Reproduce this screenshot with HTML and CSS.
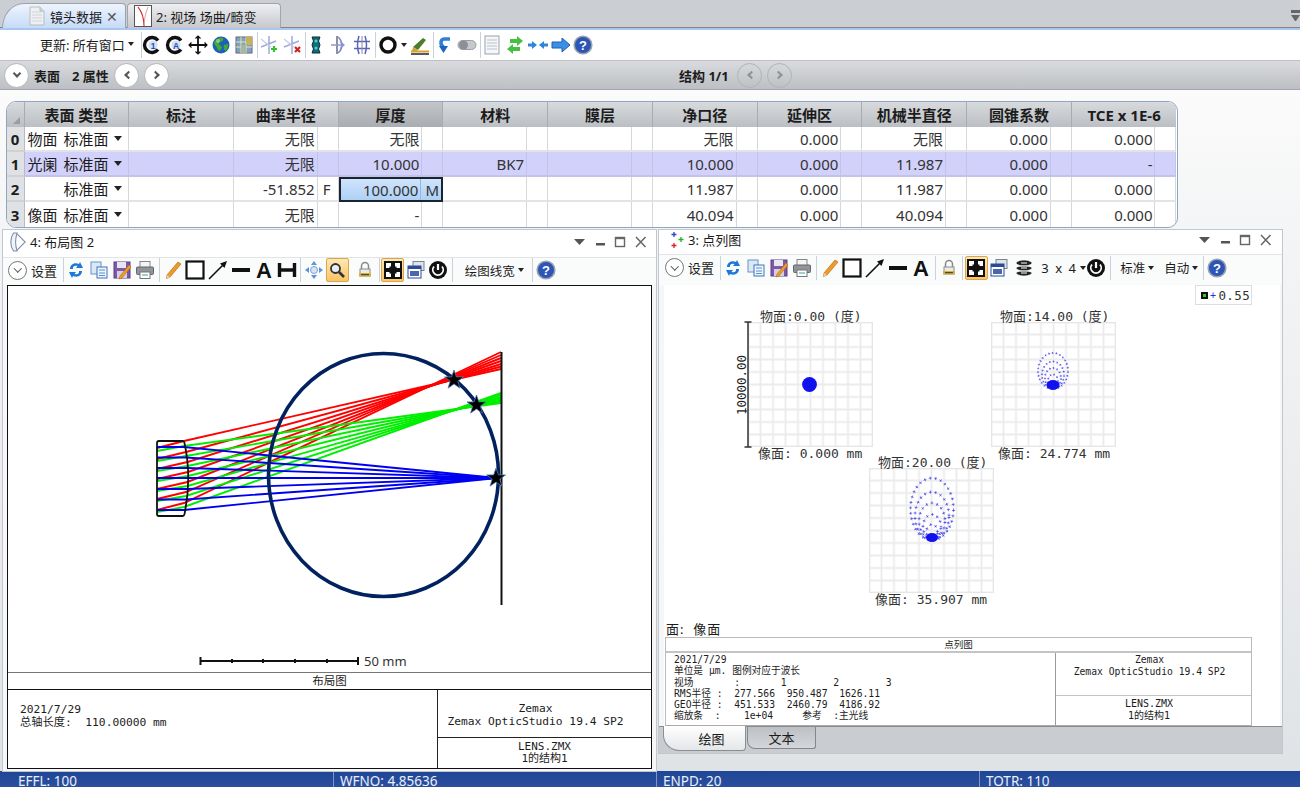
FILE: index.html
```html
<!DOCTYPE html>
<html lang="zh">
<head>
<meta charset="utf-8">
<title>OpticStudio</title>
<link rel="stylesheet" href="styles.css">
</head>
<body>
<svg class="sprite" aria-hidden="true">
  <defs>
    <symbol id="i-c1" viewBox="0 0 20 20"><path d="M16 5.500A7.500 7.500 0 1 0 16 14.500" fill="none" stroke="#111" stroke-width="3.400"/><circle cx="11" cy="10" r="4.600" fill="#cfe0f7"/><text x="11" y="13.600" class="st" fill="#2450b0">1</text></symbol>
    <symbol id="i-ca" viewBox="0 0 20 20"><path d="M16 5.500A7.500 7.500 0 1 0 16 14.500" fill="none" stroke="#111" stroke-width="3.400"/><circle cx="11" cy="10" r="4.600" fill="#cfe0f7"/><text x="11" y="13.600" class="st" fill="#2450b0">A</text></symbol>
    <symbol id="i-cross" viewBox="0 0 20 20"><path d="M10 1V19M1 10H19" stroke="#111" stroke-width="1.800"/><path d="M7.500 3.500 10 1l2.500 2.500M7.500 16.500 10 19l2.500-2.500M3.500 7.500 1 10l2.500 2.500M16.500 7.500 19 10l-2.500 2.500" fill="none" stroke="#111" stroke-width="1.200"/></symbol>
    <symbol id="i-globe" viewBox="0 0 20 20"><circle cx="10" cy="10" r="8.500" fill="#1b62b5"/><path d="M3 7c3-4 6-5 9-4 1 2-1 4-3 4s-1 3 1 4 0 4-2 5c-2-2-2-4-3-5S3 9 3 7zM13 10l4-1c.6 3-1 6-3 7-1-2-2-4-1-6z" fill="#46a838"/><circle cx="7" cy="6" r="2" fill="#bfe0a0" opacity=".6"/></symbol>
    <symbol id="i-map" viewBox="0 0 20 20"><rect x="2" y="2" width="16" height="16" fill="#7fa3c0" stroke="#667" stroke-width="1"/><path d="M2 7h16M2 12h16M7 2v16M12 2v16" stroke="#e8e2b8" stroke-width="1"/><path d="M12 2h6v8h-4l-2-3z" fill="#c9b350"/><path d="M7 10h5v8H7z" fill="#a7b8a0"/></symbol>
    <symbol id="i-lplus" viewBox="0 0 20 20"><path d="M10 1v18M2 12 17 6" fill="none" stroke="#9ea9dc" stroke-width="1.500"/><path d="M2 4l10 8" stroke="#c5cbe9" stroke-width="1.200"/><path d="M15 11v6M12 14h6" stroke="#35c335" stroke-width="2.200"/></symbol>
    <symbol id="i-lminus" viewBox="0 0 20 20"><path d="M10 1v18M2 12 17 6" fill="none" stroke="#9ea9dc" stroke-width="1.500"/><path d="M2 4l10 8" stroke="#c5cbe9" stroke-width="1.200"/><path d="M13 12l5 5M18 12l-5 5" stroke="#d42020" stroke-width="2.200"/></symbol>
    <symbol id="i-lteal" viewBox="0 0 20 20"><path d="M6 2h8L12.500 6 14 10l-1.500 4L14 18H6l1.500-4L6 10l1.500-4z" fill="#0b6f78" stroke="#102a33" stroke-width="1"/><circle cx="10" cy="6" r="1.600" fill="#48d0d8"/><circle cx="10" cy="13" r="1.600" fill="#48d0d8"/></symbol>
    <symbol id="i-larrow" viewBox="0 0 20 20"><path d="M8 1v18" stroke="#556" stroke-width="1.300"/><path d="M9 2c5 4 5 12 0 16" fill="none" stroke="#7b86cf" stroke-width="1.600"/><path d="M2 10H15M11 6.500 15 10l-4 3.500" fill="none" stroke="#8d96d6" stroke-width="1.300"/></symbol>
    <symbol id="i-lring" viewBox="0 0 20 20"><path d="M7 1c-2 6-2 12 0 18M13 1c2 6 2 12 0 18" fill="none" stroke="#5a65b5" stroke-width="1.500"/><path d="M2 6.500H18M2 13.500H18" stroke="#5a65b5" stroke-width="1.300"/><path d="M10 1v18" stroke="#889" stroke-width="1"/></symbol>
    <symbol id="i-ring" viewBox="0 0 20 20"><circle cx="10" cy="10" r="7" fill="none" stroke="#111" stroke-width="3.400"/></symbol>
    <symbol id="i-brush" viewBox="0 0 20 20"><path d="M3 12l10-9 3 2-8 10z" fill="#4c7d2a"/><path d="M3 12l5 3-2 1.500H2z" fill="#c7a640"/><path d="M1 16.500H19" stroke="#e0a020" stroke-width="2"/><path d="M1 19H19" stroke="#223" stroke-width="1.500"/></symbol>
    <symbol id="i-curve" viewBox="0 0 20 20"><path d="M15 4H9C5 4 5 11 9 12" fill="none" stroke="#2e7fd6" stroke-width="3.600"/><path d="M4 11h9l-4.500 7z" fill="#1a65bd"/></symbol>
    <symbol id="i-toggle" viewBox="0 0 20 20"><rect x="1" y="5.500" width="18" height="9" rx="4.500" fill="#c6c8cb" stroke="#9a9da2"/><circle cx="6.500" cy="10" r="4.500" fill="#8c9096"/></symbol>
    <symbol id="i-sheet" viewBox="0 0 20 20"><rect x="3" y="1" width="14" height="18" fill="#f4f6f8" stroke="#9aa3ad"/><path d="M5 5h10M5 8h10M5 11h10M5 14h10" stroke="#b9c3ce" stroke-width="1"/></symbol>
    <symbol id="i-green" viewBox="0 0 20 20"><path d="M5 4H12V1l6 5-6 5V8H5zM15 12H8V9l-6 5 6 5v-3h7z" fill="#45c040"/></symbol>
    <symbol id="i-arrows2" viewBox="0 0 20 20"><path d="M0 8.500h4V6l5 4-5 4v-2.500H0zM20 8.500h-4V6l-5 4 5 4v-2.500h4z" fill="#2d85dd"/></symbol>
    <symbol id="i-arrow1" viewBox="0 0 20 20"><path d="M1 7h10V3l8 7-8 7v-4H1z" fill="#3b90e6" stroke="#1c5fb0" stroke-width="1"/></symbol>
    <symbol id="i-help" viewBox="0 0 20 20"><circle cx="10" cy="10" r="8.800" fill="#2d55b5" stroke="#9aa2b0" stroke-width="1.600"/><text x="10" y="14.500" class="sq">?</text></symbol>
    <symbol id="i-refresh" viewBox="0 0 20 20"><path d="M4 9c0-4 4-7 9-5l1-2 3 6-7 0 1.500-2C8 5 6.500 7 7 9z" fill="#1d78d8"/><path d="M16 11c0 4-4 7-9 5l-1 2-3-6 7 0-1.500 2C12 15 13.500 13 13 11z" fill="#1d78d8"/></symbol>
    <symbol id="i-copy" viewBox="0 0 20 20"><rect x="2" y="2" width="10" height="12" fill="#dbe8f7" stroke="#6d92c5"/><rect x="8" y="7" width="10" height="11" fill="#eef5fc" stroke="#3c74bd"/><path d="M10 10h6M10 13h6M10 15.500h6" stroke="#5c8ed0"/></symbol>
    <symbol id="i-save" viewBox="0 0 20 20"><rect x="2" y="2" width="16" height="16" fill="#7d5aa8" stroke="#5a3d84"/><rect x="5" y="2" width="9" height="6" fill="#e8e4f0"/><rect x="5" y="11" width="10" height="7" fill="#d5cfe2"/><path d="M17 5 8 16l-1 3 3-1 9-11z" fill="#ee9b1f" stroke="#a96810" stroke-width=".5"/></symbol>
    <symbol id="i-print" viewBox="0 0 20 20"><rect x="5" y="1.500" width="10" height="6" fill="#f5f5f5" stroke="#888"/><rect x="1.500" y="7" width="17" height="7.500" rx="1" fill="#8f959b" stroke="#666"/><rect x="5" y="12" width="10" height="6.500" fill="#fff" stroke="#777"/><path d="M7 15h6" stroke="#3f9e9e"/></symbol>
    <symbol id="i-pencil" viewBox="0 0 20 20"><path d="M15 2l3 2L7 17l-3.500 1.500L4 15z" fill="#ee9a2c" stroke="#b86c14" stroke-width=".7"/><path d="M4 15l3 2-3.500 1.500z" fill="#e9d1a8"/></symbol>
    <symbol id="i-rect" viewBox="0 0 20 20"><rect x="1.500" y="1.500" width="17" height="17" fill="#fff" stroke="#111" stroke-width="2.200"/></symbol>
    <symbol id="i-arrow" viewBox="0 0 20 20"><path d="M1 19 16 4" stroke="#111" stroke-width="1.600"/><path d="M19 1 12 3.500 16.500 8z" fill="#111"/></symbol>
    <symbol id="i-line" viewBox="0 0 20 20"><rect x="1" y="8" width="18" height="4" fill="#111"/></symbol>
    <symbol id="i-a" viewBox="0 0 20 20"><text x="10" y="18" class="sa">A</text></symbol>
    <symbol id="i-h" viewBox="0 0 20 20"><path d="M2.500 3v14M17.500 3v14M2.500 10h15" stroke="#111" stroke-width="3.400"/></symbol>
    <symbol id="i-move" viewBox="0 0 20 20"><path d="M10 1 7 5h6zM10 19l-3-4h6zM1 10l4-3v6zM19 10l-4-3v6z" fill="#5f93d3"/><circle cx="10" cy="10" r="3.500" fill="#d5e3f4" stroke="#7fa3d0"/></symbol>
    <symbol id="i-zoom" viewBox="0 0 20 20"><circle cx="8.500" cy="8.500" r="4.500" fill="#e9eef4" stroke="#333" stroke-width="1.800"/><path d="M12 12l5 5" stroke="#333" stroke-width="2.600"/></symbol>
    <symbol id="i-lock" viewBox="0 0 20 20"><path d="M6.500 9V6a3.500 3.500 0 0 1 7 0v3" fill="none" stroke="#888" stroke-width="1.500"/><rect x="5" y="9" width="10" height="7" fill="#e9eaec" stroke="#8b8b8b"/><rect x="4" y="13" width="12" height="3.500" fill="#d7b13e"/><path d="M6 14.700h8" stroke="#333"/></symbol>
    <symbol id="i-fit" viewBox="0 0 20 20"><rect x="1" y="1" width="18" height="18" fill="#111"/><path d="M3 3h5v3.500H6.500V8H3zM17 3h-5v3.500h1.500V8H17zM3 17h5v-3.500H6.500V12H3zM17 17h-5v-3.500h1.500V12H17z" fill="#fff"/></symbol>
    <symbol id="i-win" viewBox="0 0 20 20"><rect x="7" y="1.500" width="11" height="9" fill="#dfe3ea" stroke="#7a8290"/><rect x="2" y="6" width="13" height="12" fill="#fff" stroke="#2a4a9a"/><rect x="2" y="6" width="13" height="3" fill="#2a4a9a"/><rect x="4" y="11" width="9" height="5" fill="#4c66ae"/></symbol>
    <symbol id="i-power" viewBox="0 0 20 20"><circle cx="10" cy="10" r="9" fill="#111"/><path d="M6 6.500a5.200 5.200 0 1 0 8 0" fill="none" stroke="#fff" stroke-width="1.800"/><path d="M10 4v6" stroke="#fff" stroke-width="2.200"/></symbol>
    <symbol id="i-layers" viewBox="0 0 20 20"><path d="M10 2c5 0 8 2 8 3s-3 3-8 3-8-2-8-3 3-3 8-3zM2 10c0-1 3-2 8-2s8 1 8 2-3 3-8 3-8-2-8-3zM2 15c0-1 3-2 8-2s8 1 8 2-3 3-8 3-8-2-8-3z" fill="#222" stroke="#fff" stroke-width=".8"/><path d="M7 5h6M7 10h6M7 15h6" stroke="#fff" stroke-width="1.200"/></symbol>
    <symbol id="i-doc" viewBox="0 0 16 20"><path d="M1 1h10l4 4v14H1z" fill="#eef0f2" stroke="#b8bcc1"/><path d="M3 6h10M3 9h10M3 12h10M3 15h10" stroke="#d0d4d9"/><path d="M11 1v4h4" fill="#d6d9dd" stroke="#b8bcc1"/></symbol>
    <symbol id="i-field" viewBox="0 0 18 22"><rect x=".5" y=".5" width="17" height="21" fill="#fff" stroke="#555"/><path d="M4 2c4 5 6 12 6 19" fill="none" stroke="#d32020" stroke-width="1.200"/><path d="M14 2c-2 5-4 12-4 19" fill="none" stroke="#d8a0a0"/></symbol>
    <symbol id="i-lens" viewBox="0 0 20 22"><path d="M5 1C1 7 1 15 5 21L9 21C7 15 7 7 9 1z" fill="#f0f3f7" stroke="#7d8cab" stroke-width="1.200"/><path d="M9 2 18 11 9 20" fill="#fff" stroke="#7d8cab" stroke-width="1.200"/></symbol>
    <symbol id="i-spots" viewBox="0 0 18 18"><path d="M6 1v5M3.500 3.500h5" stroke="#3040d0" stroke-width="1.300"/><path d="M13 6v5M10.500 8.500h5" stroke="#25b025" stroke-width="1.300"/><path d="M6 12v5M3.500 14.500h5" stroke="#e02020" stroke-width="1.300"/></symbol>
    <symbol id="i-winctl" viewBox="0 0 74 14"><path d="M0 4h11L5.500 10z" fill="#555"/><rect x="22" y="8" width="9" height="2.500" fill="#555"/><rect x="41.500" y="2.500" width="9" height="9" fill="none" stroke="#666" stroke-width="1.400"/><path d="M41.500 3.200h9" stroke="#666" stroke-width="2"/><path d="M62 2l9.500 10M71.500 2 62 12" stroke="#666" stroke-width="1.500"/></symbol>
    <symbol id="i-star" viewBox="-10 -10 20 20"><path d="M0-10 2.400-3.100 9.500-3.100 3.800 1.200 5.900 8.100 0 4-5.900 8.100-3.800 1.200-9.500-3.100-2.400-3.100z" fill="#000" stroke="#4d79b0" stroke-width=".8"/></symbol>
  </defs>
</svg>

<div class="app">
  <div class="tabbar">
    <div class="tab tab-active">
      <svg class="ic-doc"><use href="#i-doc"/></svg>
      <span>镜头数据</span>
      <span class="tab-x">✕</span>
    </div>
    <div class="tab tab-idle">
      <svg class="ic-field"><use href="#i-field"/></svg>
      <span>2: 视场 场曲/畸变</span>
    </div>
    <div class="tab-menu"><span class="tab-menu-bar"></span><span class="tab-menu-arrow"></span></div>
  </div>

  <div class="mainbar">
    <span class="tool-label">更新: 所有窗口<i class="caret"></i></span>
    <span class="sep sep-first"></span>
    <span class="tl"><svg class="i"><use href="#i-c1"/></svg></span>
    <span class="tl"><svg class="i"><use href="#i-ca"/></svg></span>
    <span class="tl"><svg class="i"><use href="#i-cross"/></svg></span>
    <span class="tl"><svg class="i"><use href="#i-globe"/></svg></span>
    <span class="tl"><svg class="i"><use href="#i-map"/></svg></span>
    <span class="sep sep-wide"></span>
    <span class="tl"><svg class="i"><use href="#i-lplus"/></svg></span>
    <span class="tl"><svg class="i"><use href="#i-lminus"/></svg></span>
    <span class="sep"></span>
    <span class="tl"><svg class="i"><use href="#i-lteal"/></svg></span>
    <span class="tl"><svg class="i"><use href="#i-larrow"/></svg></span>
    <span class="tl"><svg class="i"><use href="#i-lring"/></svg></span>
    <span class="sep"></span>
    <span class="tl tl-wide"><svg class="i"><use href="#i-ring"/></svg><i class="caret"></i></span>
    <span class="tl"><svg class="i"><use href="#i-brush"/></svg></span>
    <span class="sep"></span>
    <span class="tl"><svg class="i"><use href="#i-curve"/></svg></span>
    <span class="tl"><svg class="i"><use href="#i-toggle"/></svg></span>
    <span class="sep"></span>
    <span class="tl"><svg class="i"><use href="#i-sheet"/></svg></span>
    <span class="tl"><svg class="i"><use href="#i-green"/></svg></span>
    <span class="tl"><svg class="i"><use href="#i-arrows2"/></svg></span>
    <span class="tl"><svg class="i"><use href="#i-arrow1"/></svg></span>
    <span class="tl"><svg class="i"><use href="#i-help"/></svg></span>
  </div>

  <div class="surfbar">
    <span class="rbtn rbtn-first"><i class="chev chev-down"></i></span>
    <b class="surf-a">表面</b>
    <b class="surf-b">2 属性</b>
    <span class="rbtn rbtn-prev"><i class="chev chev-left"></i></span>
    <span class="rbtn rbtn-next"><i class="chev chev-right"></i></span>
    <b class="surf-c">结构 1/1</b>
    <span class="rbtn rbtn-off rbtn-cfg"><i class="chev chev-left"></i></span>
    <span class="rbtn rbtn-off rbtn-next"><i class="chev chev-right"></i></span>
  </div>

  <div class="workspace">
    <div class="grid">
      <div class="h h0"></div>
      <div class="h">表面 类型</div><div class="h">标注</div><div class="h">曲率半径</div><div class="h h-sel">厚度</div><div class="h">材料</div><div class="h">膜层</div><div class="h">净口径</div><div class="h">延伸区</div><div class="h">机械半直径</div><div class="h">圆锥系数</div><div class="h h-last">TCE x 1E-6</div>

      <div class="n">0</div>
      <div class="c t"><span class="t-a">物面</span><span class="t-b">标准面</span><i class="caret caret-b"></i></div>
      <div class="c"></div>
      <div class="c"><span class="v">无限</span><span class="s"></span></div>
      <div class="c"><span class="v">无限</span><span class="s"></span></div>
      <div class="c"><span class="v"></span><span class="s"></span></div>
      <div class="c"><span class="v"></span><span class="s"></span></div>
      <div class="c"><span class="v">无限</span><span class="s"></span></div>
      <div class="c"><span class="v">0.000</span><span class="s"></span></div>
      <div class="c"><span class="v">无限</span><span class="s"></span></div>
      <div class="c"><span class="v">0.000</span><span class="s"></span></div>
      <div class="c"><span class="v">0.000</span><span class="s"></span></div>

      <div class="n">1</div>
      <div class="c t hl"><span class="t-a">光阑</span><span class="t-b">标准面</span><i class="caret caret-b"></i></div>
      <div class="c hl"></div>
      <div class="c hl"><span class="v">无限</span><span class="s"></span></div>
      <div class="c hl"><span class="v">10.000</span><span class="s"></span></div>
      <div class="c hl"><span class="v">BK7</span><span class="s"></span></div>
      <div class="c hl"><span class="v"></span><span class="s"></span></div>
      <div class="c hl"><span class="v">10.000</span><span class="s"></span></div>
      <div class="c hl"><span class="v">0.000</span><span class="s"></span></div>
      <div class="c hl"><span class="v">11.987</span><span class="s"></span></div>
      <div class="c hl"><span class="v">0.000</span><span class="s"></span></div>
      <div class="c hl"><span class="v">-</span><span class="s"></span></div>

      <div class="n">2</div>
      <div class="c t"><span class="t-a"></span><span class="t-b">标准面</span><i class="caret caret-b"></i></div>
      <div class="c"></div>
      <div class="c"><span class="v">-51.852</span><span class="s">F</span></div>
      <div class="c c-sel"><span class="v">100.000</span><span class="s">M</span></div>
      <div class="c"><span class="v"></span><span class="s"></span></div>
      <div class="c"><span class="v"></span><span class="s"></span></div>
      <div class="c"><span class="v">11.987</span><span class="s"></span></div>
      <div class="c"><span class="v">0.000</span><span class="s"></span></div>
      <div class="c"><span class="v">11.987</span><span class="s"></span></div>
      <div class="c"><span class="v">0.000</span><span class="s"></span></div>
      <div class="c"><span class="v">0.000</span><span class="s"></span></div>

      <div class="n n-end">3</div>
      <div class="c t c-end"><span class="t-a">像面</span><span class="t-b">标准面</span><i class="caret caret-b"></i></div>
      <div class="c c-end"></div>
      <div class="c c-end"><span class="v">无限</span><span class="s"></span></div>
      <div class="c c-end"><span class="v">-</span><span class="s"></span></div>
      <div class="c c-end"><span class="v"></span><span class="s"></span></div>
      <div class="c c-end"><span class="v"></span><span class="s"></span></div>
      <div class="c c-end"><span class="v">40.094</span><span class="s"></span></div>
      <div class="c c-end"><span class="v">0.000</span><span class="s"></span></div>
      <div class="c c-end"><span class="v">40.094</span><span class="s"></span></div>
      <div class="c c-end"><span class="v">0.000</span><span class="s"></span></div>
      <div class="c c-end"><span class="v">0.000</span><span class="s"></span></div>
    </div>

    <section class="win win-layout">
      <header class="win-title title-a">
        <svg class="ic-lens"><use href="#i-lens"/></svg>
        <span>4: 布局图 2</span>
        <svg class="winctl"><use href="#i-winctl"/></svg>
      </header>
      <div class="winbar bar-a">
        <span class="cbtn"><i class="chev chev-down"></i></span>
        <span class="set">设置</span>
        <span class="sep"></span>
        <span class="tl"><svg class="i"><use href="#i-refresh"/></svg></span>
        <span class="tl"><svg class="i"><use href="#i-copy"/></svg></span>
        <span class="tl"><svg class="i"><use href="#i-save"/></svg></span>
        <span class="tl"><svg class="i"><use href="#i-print"/></svg></span>
        <span class="sep"></span>
        <span class="tl"><svg class="i"><use href="#i-pencil"/></svg></span>
        <span class="tl"><svg class="i"><use href="#i-rect"/></svg></span>
        <span class="tl"><svg class="i"><use href="#i-arrow"/></svg></span>
        <span class="tl"><svg class="i"><use href="#i-line"/></svg></span>
        <span class="tl"><svg class="i"><use href="#i-a"/></svg></span>
        <span class="tl"><svg class="i"><use href="#i-h"/></svg></span>
        <span class="sep"></span>
        <span class="tl"><svg class="i"><use href="#i-move"/></svg></span>
        <span class="tl tl-on"><svg class="i"><use href="#i-zoom"/></svg></span>
        <span class="tl tl-gap"><svg class="i"><use href="#i-lock"/></svg></span>
        <span class="sep"></span>
        <span class="tl tl-on"><svg class="i"><use href="#i-fit"/></svg></span>
        <span class="tl"><svg class="i"><use href="#i-win"/></svg></span>
        <span class="tl"><svg class="i"><use href="#i-power"/></svg></span>
        <span class="sep"></span>
        <span class="drop drop-w">绘图线宽<i class="caret"></i></span>
        <span class="sep"></span>
        <span class="tl"><svg class="i"><use href="#i-help"/></svg></span>
      </div>
      <div class="plot">
        <svg class="plot-svg" viewBox="8 286 643 386">
          <g class="ray-r">
            <polyline points="157,448 184,441 501,369"/>
            <polyline points="157,459 186,452 501,366.500"/>
            <polyline points="157,469 187.500,462 501,364"/>
            <polyline points="157,479 188,472 501,361"/>
            <polyline points="157,489 187.500,482 501,358"/>
            <polyline points="157,499 186,492 501,355"/>
            <polyline points="157,510 184,503 501,352"/>
          </g>
          <g class="ray-g">
            <polyline points="157,451 184,446 501,403"/>
            <polyline points="157,461 186,456 501,401.500"/>
            <polyline points="157,471 187.500,466 501,400"/>
            <polyline points="157,481 188,476 501,398.500"/>
            <polyline points="157,491 187.500,486 501,397"/>
            <polyline points="157,501 186,496 501,395"/>
            <polyline points="157,512 184,507 501,393"/>
          </g>
          <g class="ray-b">
            <polyline points="157,447 184,447 497,478"/>
            <polyline points="157,457.500 186,457.500 497,478"/>
            <polyline points="157,468 187.500,468 497,478"/>
            <polyline points="157,478 188,478 497,478"/>
            <polyline points="157,489 187.500,489 497,478"/>
            <polyline points="157,499.500 186,499.500 497,478"/>
            <polyline points="157,510 184,510 497,478"/>
          </g>
          <path class="lens" d="M159 441H183Q184 441 184.500 443Q192 478 184.500 514Q184 516 183 516H159Q157 516 157 514V443Q157 441 159 441Z"/>
          <ellipse class="sphere" cx="383.500" cy="475" rx="115" ry="121.500"/>
          <path class="imgline" d="M501.500 352V605"/>
          <use href="#i-star" x="444" y="370" width="20" height="20"/>
          <use href="#i-star" x="466.500" y="395" width="20" height="20"/>
          <use href="#i-star" x="486" y="468" width="20" height="20"/>
          <path class="scale" d="M200 661H358M200.500 657V665M358 657V665M232 659V663M263 659V663M295 659V663M327 659V663"/>
          <text x="364" y="666" class="scale-t">50 mm</text>
        </svg>
        <div class="strip strip-a">布局图</div>
        <div class="info info-a">
          <div class="info-l">
            <div>2021/7/29</div>
            <div>总轴长度:  110.00000 mm</div>
          </div>
          <div class="info-r">
            <div class="info-r1">Zemax<br>Zemax OpticStudio 19.4 SP2</div>
            <div class="info-r2">LENS.ZMX<br>1的结构1</div>
          </div>
        </div>
      </div>
    </section>

    <section class="win win-spot">
      <header class="win-title title-b">
        <svg class="ic-spots"><use href="#i-spots"/></svg>
        <span>3: 点列图</span>
        <svg class="winctl"><use href="#i-winctl"/></svg>
      </header>
      <div class="winbar bar-b">
        <span class="cbtn"><i class="chev chev-down"></i></span>
        <span class="set">设置</span>
        <span class="sep"></span>
        <span class="tl"><svg class="i"><use href="#i-refresh"/></svg></span>
        <span class="tl"><svg class="i"><use href="#i-copy"/></svg></span>
        <span class="tl"><svg class="i"><use href="#i-save"/></svg></span>
        <span class="tl"><svg class="i"><use href="#i-print"/></svg></span>
        <span class="sep"></span>
        <span class="tl"><svg class="i"><use href="#i-pencil"/></svg></span>
        <span class="tl"><svg class="i"><use href="#i-rect"/></svg></span>
        <span class="tl"><svg class="i"><use href="#i-arrow"/></svg></span>
        <span class="tl"><svg class="i"><use href="#i-line"/></svg></span>
        <span class="tl"><svg class="i"><use href="#i-a"/></svg></span>
        <span class="sep"></span>
        <span class="tl"><svg class="i"><use href="#i-lock"/></svg></span>
        <span class="sep"></span>
        <span class="tl tl-on"><svg class="i"><use href="#i-fit"/></svg></span>
        <span class="tl"><svg class="i"><use href="#i-win"/></svg></span>
        <span class="tl tl-lay"><svg class="i"><use href="#i-layers"/></svg></span>
        <span class="drop drop-n">3 x 4<i class="caret"></i></span>
        <span class="tl"><svg class="i"><use href="#i-power"/></svg></span>
        <span class="sep"></span>
        <span class="drop drop-s">标准<i class="caret"></i></span>
        <span class="drop drop-s">自动<i class="caret"></i></span>
        <span class="sep"></span>
        <span class="tl"><svg class="i"><use href="#i-help"/></svg></span>
      </div>
      <div class="spot">
        <div class="legend"><span class="legend-box"></span><span class="legend-plus">+</span><span>0.55</span></div>
        <svg class="spot-svg" viewBox="664 285 616 337">
          <defs>
            <pattern id="cell" x="6.250" y="6.250" width="12.500" height="12.500" patternUnits="userSpaceOnUse">
              <path d="M6.250 0V12.500M0 6.250H12.500" fill="none" stroke="#ebebeb" stroke-width="1.700"/>
            </pattern>
            <g id="rings-a">
              <ellipse cx="1053" cy="371" rx="15" ry="18"/>
              <ellipse cx="1053" cy="375" rx="11" ry="13.500"/>
              <ellipse cx="1053" cy="378" rx="8" ry="10"/>
              <ellipse cx="1053" cy="381" rx="5" ry="6.500"/>
            </g>
            <g id="rings-b">
              <ellipse cx="932" cy="509" rx="21.500" ry="31"/>
              <ellipse cx="932" cy="516" rx="17" ry="24"/>
              <ellipse cx="932" cy="521" rx="13" ry="18"/>
              <ellipse cx="932" cy="527" rx="9" ry="12.500"/>
              <ellipse cx="932" cy="532" rx="5.500" ry="7.500"/>
            </g>
          </defs>
          <g>
            <svg x="748" y="322" width="125" height="125" viewBox="0 0 125 125"><rect width="125" height="125" fill="url(#cell)"/><rect width="125" height="125" class="gb"/></svg>
            <svg x="991" y="322" width="125" height="125" viewBox="0 0 125 125"><rect width="125" height="125" fill="url(#cell)"/><rect width="125" height="125" class="gb"/></svg>
            <svg x="869" y="468" width="125" height="125" viewBox="0 0 125 125"><rect width="125" height="125" fill="url(#cell)"/><rect width="125" height="125" class="gb"/></svg>
          </g>
          <path class="bar" d="M748 322V447M744.500 322H751.500M744.500 447H751.500"/>
          <path class="bar-tick" d="M745 411H748"/>
          <circle cx="809.500" cy="384.500" r="7.400" fill="#1111ee"/>
          <use href="#rings-a" class="pa-h"/>
          <use href="#rings-a" class="pa-v"/>
          <use href="#rings-b" class="pb-h"/>
          <use href="#rings-b" class="pb-v"/>
          <ellipse cx="1053" cy="385" rx="6.500" ry="5" fill="#1111ee"/>
          <ellipse cx="932" cy="537.500" rx="6" ry="4.500" fill="#1111ee"/>
          <g class="sp-t">
            <text x="760" y="321">物面:0.00 (度)</text>
            <text x="758" y="458">像面: 0.000 mm</text>
            <text x="1000" y="321">物面:14.00 (度)</text>
            <text x="998" y="458">像面: 24.774 mm</text>
            <text x="878" y="467">物面:20.00 (度)</text>
            <text x="875" y="604">像面: 35.907 mm</text>
            <text class="sp-rot" x="746" y="385" transform="rotate(-90 746 385)">10000.00</text>
          </g>
        </svg>
        <div class="surf-label">面:  像面</div>
        <div class="sp-info">
          <div class="strip strip-b">点列图</div>
          <div class="info info-b">
            <div class="info-b-l">2021/7/29
单位是 μm. 图例对应于波长
视场       :       1        2        3
RMS半径 :  277.566  950.487  1626.11
GEO半径 :  451.533  2460.79  4186.92
缩放条  :    1e+04     参考  :主光线</div>
            <div class="info-r">
              <div class="info-r1 r1-b">Zemax<br>Zemax OpticStudio 19.4 SP2</div>
              <div class="info-r2 r2-b">LENS.ZMX<br>1的结构1</div>
            </div>
          </div>
        </div>
      </div>
      <div class="wintabs">
        <span class="wt wt-on">绘图</span>
        <span class="wt wt-off">文本</span>
      </div>
    </section>
  </div>

  <footer class="status">
    <span class="st1">EFFL: 100</span>
    <span class="st2">WFNO: 4.85636</span>
    <span class="st3">ENPD: 20</span>
    <span class="st4">TOTR: 110</span>
  </footer>
</div>
</body>
</html>
```

FILE: styles.css
```css
* { box-sizing: border-box; }
html, body { margin: 0; padding: 0; height: 787px; overflow: hidden; background: #fafafa; }
body { font-family: "Noto Sans", "Noto Sans CJK SC", sans-serif; color: #1c1c1c; font-size: 13px; }
.sprite { position: absolute; width: 0; height: 0; }
.st { font: bold 8.500px "Liberation Sans", sans-serif; text-anchor: middle; }
.sq { font: bold 13px "Liberation Sans", sans-serif; text-anchor: middle; fill: #fff; }
.sa { font: bold 22px "Liberation Sans", sans-serif; text-anchor: middle; fill: #111; }

.app { display: flex; flex-direction: column; height: 787px; width: 1300px; }

/* document tabs */
.tabbar { height: 30px; flex: none; background: #cbced3; border-bottom: 2px solid #a9c7ec; box-shadow: inset 0 -1px 0 #7f8388; display: flex; align-items: flex-end; position: relative; padding-left: 2px; }
.tab { height: 25px; display: flex; align-items: center; font-size: 13px; white-space: nowrap; }
.tab-active { width: 124px; padding-left: 26px; background: linear-gradient(#eef4fd, #c6dbf7); border: 1px solid #9aa3ad; border-bottom: 0; border-radius: 22px 4px 0 0 / 25px 4px 0 0; }
.ic-doc { width: 16px; height: 20px; margin-right: 5px; flex: none; }
.tab-x { margin-left: 4px; color: #555; font-size: 14px; }
.tab-idle { width: 154px; margin-left: 1px; padding-left: 6px; background: linear-gradient(#eeeff1, #c6c8cd); border: 1px solid #a2a5aa; border-bottom: 0; border-radius: 4px 4px 0 0; }
.ic-field { width: 18px; height: 22px; margin-right: 4px; flex: none; }
.tab-menu { position: absolute; right: 0; top: 10px; width: 9px; }
.tab-menu-bar { display: block; height: 3px; background: #666; }
.tab-menu-arrow { display: block; margin-top: 2px; border: 4.500px solid transparent; border-top: 6px solid #666; border-bottom: 0; }

/* main toolbar */
.mainbar { height: 30px; flex: none; background: #fff; display: flex; align-items: center; padding-left: 40px; }
.tool-label { width: 96px; font-size: 13px; white-space: nowrap; display: flex; align-items: center; padding-bottom: 2px; }
.caret { display: inline-block; margin-left: 3px; border: 3px solid transparent; border-top: 4px solid #222; border-bottom: 0; }
.caret-b { border-width: 4px; border-top-width: 5px; margin-left: 4px; }
.sep { width: 1px; height: 26px; background: #c8d2dd; margin: 0 -.5px 0 1.500px; flex: none; }
.sep-first { margin-left: 4.500px; }
.sep-wide { margin-left: 2px; }
.tl { width: 22.800px; height: 26px; flex: none; display: flex; align-items: center; justify-content: center; }
.tl-wide { width: 31px; margin-left: 2px; }
.i { width: 20px; height: 20px; display: block; flex: none; }
.tl-on { background: linear-gradient(#fde9b4, #fbc466); border: 1px solid #dba64a; border-radius: 2px; }
.tl-gap { margin-left: 5px; }
.tl-lay { margin-left: 2px; }

/* surface bar */
.surfbar { height: 30px; flex: none; background: linear-gradient(#d9dbde, #bcbfc3); border-top: 1px solid #bdbfc3; border-bottom: 1px solid #a2a5a9; display: flex; align-items: center; padding-left: 4px; font-size: 13px; }
.surfbar b { white-space: nowrap; font-weight: 700; }
.rbtn { width: 25px; height: 25px; flex: none; border-radius: 50%; background: #fff; border: 1px solid #b3b6ba; display: flex; align-items: center; justify-content: center; }
.rbtn-off { background: transparent; border-color: #b0b3b7; }
.rbtn-off .chev { border-color: #8e9297; }
.surf-a { margin-left: 5px; width: 38px; }
.surf-b { width: 42px; }
.rbtn-next { margin-left: 5px; }
.surf-c { margin-left: 510px; width: 58px; }
.chev { display: block; width: 6px; height: 6px; border-right: 2px solid #555; border-bottom: 2px solid #555; }
.chev-down { transform: translateY(-1.500px) rotate(45deg); }
.chev-left { transform: translateX(1.500px) rotate(135deg); }
.chev-right { transform: translateX(-1.500px) rotate(-45deg); }

/* workspace */
.workspace { flex: 1; position: relative; background: linear-gradient(#fbfbfb 0, #f4f5f6 20%, #e0e3e6 100%); padding: 11px 0 0 5.500px; min-height: 0; }

/* table */
.grid { width: 1172px; height: 127px; border: 1px solid #8ea6c0; border-radius: 10px; overflow: hidden; display: grid; grid-template-columns: 18px repeat(11, 1fr); grid-template-rows: repeat(5, 25px); background: #fff; font-size: 15px; }
.h { background: linear-gradient(#d8dadd, #bbbfc3); border-right: 1px solid #a9adb2; display: flex; align-items: center; justify-content: center; font-weight: 700; font-size: 15px; white-space: nowrap; }
.h0 { align-items: flex-end; justify-content: flex-end; padding: 0 4px 3px 0; }
.h0::after { content: ""; border-style: solid; border-width: 0 0 7px 7px; border-color: transparent transparent #9a9da1 transparent; }
.h-last { border-right: 0; }
.h-sel { background: linear-gradient(#c3c5c8, #a9acb0); }
.n { background: #dfe1e4; border-right: 1px solid #b8bbbf; border-bottom: 2px solid #cfd1d4; display: flex; align-items: center; justify-content: center; font-weight: 700; font-size: 15px; }
.n-end { border-bottom: 0; }
.c { border-right: 1px solid #d6d8db; border-bottom: 2px solid #e2e3e5; display: flex; align-items: center; min-width: 0; white-space: nowrap; }
.c-end { border-bottom: 0; }
.v { flex: 1; text-align: right; padding-right: 2px; min-width: 0; color: #333; }
.s { width: 21px; height: 100%; border-left: 1px solid #d6d8db; flex: none; padding-left: 5px; display: flex; align-items: center; color: #333; }
.t { padding-left: 3px; }
.t-a { width: 36px; flex: none; }
.t-b { flex: none; width: 46px; }
.hl { background: #d1d1fb; border-color: #c3c3e6; }
.hl .s { border-color: #c3c3e6; }
.c-sel { background: linear-gradient(#cfe4fb, #aed0f6); border: 2px solid #1a2430; }
.c-sel .s { border-left-color: #9bb7d6; padding-left: 4px; }

/* windows on the desktop */
.win { position: absolute; background: #fff; border: 1px solid #c3c6ca; display: flex; flex-direction: column; }
.win-layout { left: 2px; top: 139px; width: 655px; height: 543px; background: #f6f7f8; }
.win-spot { left: 658px; top: 139px; width: 625px; height: 525px; background: #f5f6f7; }
.win-title { flex: none; display: flex; align-items: center; background: #fff; font-size: 13px; border-bottom: 1px solid #e2e4e7; white-space: nowrap; }
.title-a { height: 28px; padding: 0 0 4px 6px; }
.title-b { height: 25px; padding: 0 0 5px 9px; }
.ic-lens { width: 18px; height: 22px; margin-right: 3px; flex: none; }
.ic-spots { width: 18px; height: 18px; margin-right: 2px; flex: none; }
.winctl { width: 74px; height: 14px; margin-left: auto; flex: none; }
.title-a .winctl { margin-right: 8px; }
.title-b .winctl { margin-right: 9px; }
.winbar { flex: none; height: 27px; background: #fafbfb; display: flex; align-items: center; font-size: 13px; white-space: nowrap; padding: 0 0 3px 5px; }
.bar-b { height: 30px; padding: 0 0 5px 6px; }
.winbar .sep { height: 24px; margin: 0 1.500px 0 2.500px; }
.winbar .tl { height: 24px; }
.cbtn { width: 19px; height: 19px; border-radius: 50%; border: 1px solid #777; background: #fff; display: flex; align-items: center; justify-content: center; flex: none; }
.cbtn .chev { width: 5.500px; height: 5.500px; border-width: 1.500px; border-color: #444; }
.set { margin-left: 4px; width: 29px; flex: none; }
.drop { flex: none; display: flex; align-items: center; box-sizing: content-box; }
.drop-w { width: 65px; padding-left: 10px; font-size: 12.500px; }
.drop-n { width: 43px; padding-left: 6px; font-size: 13px; letter-spacing: 1.500px; }
.drop-s { width: 36px; padding-left: 8px; font-size: 12.500px; }

/* layout plot */
.plot { flex: 1; margin: 0 4px 2px 4px; border: 1px solid #111; background: #fff; display: flex; flex-direction: column; min-height: 0; }
.plot-svg { width: 643px; height: 386px; display: block; flex: none; }
.ray-r, .ray-g, .ray-b { fill: none; stroke-width: 1.900; }
.ray-r { stroke: #ff0000; }
.ray-g { stroke: #00ee00; }
.ray-b { stroke: #0000f0; }
.lens { fill: none; stroke: #111; stroke-width: 1.800; }
.sphere { fill: none; stroke: #02225f; stroke-width: 3.600; }
.imgline { stroke: #111; stroke-width: 2; }
.scale { fill: none; stroke: #111; stroke-width: 2; }
.scale-t { font: 13px "Noto Sans", sans-serif; fill: #333; }
.strip { text-align: center; flex: none; font-family: "DejaVu Sans Mono", "Noto Sans CJK SC", monospace; }
.strip-a { height: 18px; border-top: 1px solid #777; border-bottom: 1px solid #111; font-size: 11.500px; line-height: 17px; }
.info { display: flex; flex: 1; min-height: 0; font-family: "DejaVu Sans Mono", "Noto Sans CJK SC", monospace; }
.info-a { font-size: 11.250px; line-height: 13px; }
.info-l { width: 430px; border-right: 1px solid #222; padding: 13px 0 0 12px; }
.info-l div { white-space: pre; }
.info-r { flex: 1; display: flex; flex-direction: column; text-align: center; }
.info-r1 { height: 48px; padding: 12px 18px 0 0; border-bottom: 1px solid #222; }
.info-r2 { flex: 1; padding-top: 3px; font-size: 11px; line-height: 12px; }

/* spot diagram */
.spot { flex: 1; position: relative; margin: 0 2px 0 5px; background: #fff; min-height: 0; display: flex; flex-direction: column; }
.legend { position: absolute; top: 0; left: 531px; width: 57px; height: 20px; border: 1px solid #dedede; background: #fff; display: flex; align-items: center; font: 12.500px "DejaVu Sans Mono", monospace; color: #333; padding-left: 5px; letter-spacing: .4px; }
.legend-box { width: 7px; height: 7px; border: 2px solid #111; background: #3ac03a; flex: none; }
.legend-plus { color: #2233dd; font-size: 10px; margin: 0 2px; }
.spot-svg { width: 616px; height: 337px; display: block; flex: none; }
.gb { fill: none; stroke: #e6e6e6; stroke-width: 2.500; }
.bar { fill: none; stroke: #333; stroke-width: 1.500; }
.bar-tick { stroke: #3a6ea5; stroke-width: 1.500; }
.pa-h, .pa-v, .pb-h, .pb-v { fill: none; stroke: #1a1ae6; opacity: .7; }
.pa-h { stroke-width: .7; stroke-dasharray: 2.200 1.600; }
.pa-v { stroke-width: 2.200; stroke-dasharray: .7 3.100; stroke-dashoffset: -.75; }
.pb-h { stroke-width: .8; stroke-dasharray: 3 2.500; }
.pb-v { stroke-width: 3; stroke-dasharray: .8 4.700; stroke-dashoffset: -1.100; }
.sp-t { font: 13px "DejaVu Sans Mono", "Noto Sans CJK SC", monospace; fill: #333; white-space: pre; }
.sp-rot { text-anchor: middle; font-size: 12.500px; fill: #222; }
.surf-label { flex: none; height: 15px; padding-left: 2px; font-size: 13px; line-height: 15px; white-space: pre; letter-spacing: 1px; }
.sp-info { flex: none; width: 587px; margin-left: 1px; height: 89px; border: 1px solid #bbb; border-bottom: 1px solid #aaa; display: flex; flex-direction: column; }
.strip-b { height: 15px; border-bottom: 2px solid #c4c4c4; font-size: 9.500px; line-height: 13px; }
.info-b { font-size: 9.700px; line-height: 11.300px; }
.info-b-l { width: 390px; border-right: 1px solid #9a9a9a; padding: 1px 0 0 8px; white-space: pre; overflow: hidden; }
.r1-b { height: 43px; padding: 1px 8px 0 0; border-bottom: 1px solid #c4c4c4; line-height: 12px; }
.r2-b { font-size: 10px; line-height: 12px; padding: 2px 9px 0 0; }
.wintabs { flex: none; height: 27px; background: #c9ccd1; display: flex; align-items: flex-start; padding-left: 4px; border-top: 1px solid #888b90; }
.wt { height: 22px; display: flex; align-items: center; justify-content: center; font-size: 13px; }
.wt-on { width: 83px; height: 25px; padding-left: 14px; background: linear-gradient(#fff, #e4e6e9); border-left: 1px solid #8a8d92; border-right: 1px solid #8a8d92; border-bottom: 1px solid #8a8d92; border-radius: 0 0 4px 16px; margin-top: -1px; }
.wt-off { width: 69px; margin-left: 1px; background: linear-gradient(#bcc0c4, #d4d6d9); border-right: 1px solid #83868b; border-bottom: 1px solid #83868b; border-left: 1px solid #83868b; border-radius: 0 0 3px 8px; }

/* status bar */
.status { height: 16px; flex: none; background: linear-gradient(#1f4596, #2b4f9e); color: #eaf0fa; font-size: 13.500px; line-height: 21px; display: flex; overflow: hidden; }
.status span { display: block; flex: none; height: 16px; padding-left: 6px; white-space: nowrap; }
.status .st1 { width: 334px; padding-left: 18px; border-right: 1px solid #7f95c5; }
.st2 { width: 323px; border-right: 1px solid #7f95c5; }
.st3 { width: 323px; border-right: 1px solid #7f95c5; }
.st4 { width: 320px; }
```
